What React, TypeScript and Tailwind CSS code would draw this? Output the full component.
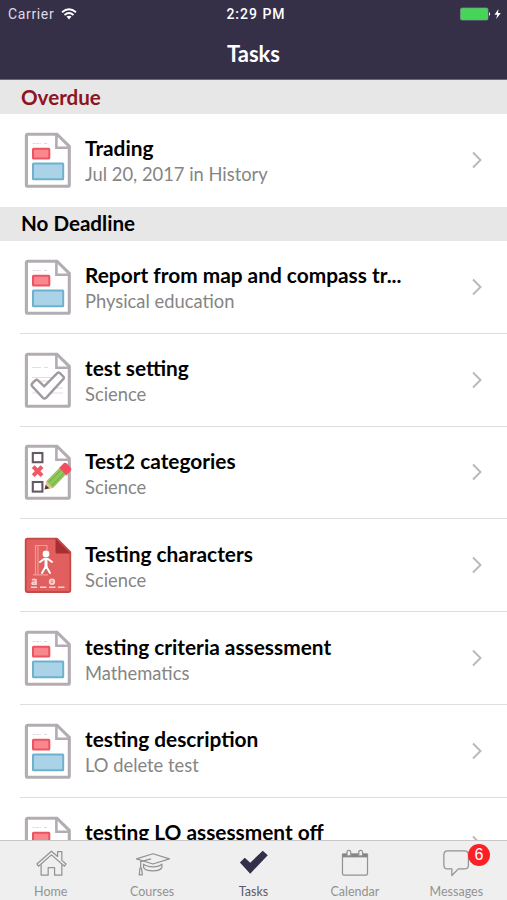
import type { ReactNode } from "react";

type IconKind = "report" | "check" | "categories" | "hangman";

interface Task {
  title: string;
  subtitle: string;
  icon: IconKind;
}

const overdue: Task[] = [
  { title: "Trading", subtitle: "Jul 20, 2017 in History", icon: "report" },
];

const noDeadline: Task[] = [
  { title: "Report from map and compass tr...", subtitle: "Physical education", icon: "report" },
  { title: "test setting", subtitle: "Science", icon: "check" },
  { title: "Test2 categories", subtitle: "Science", icon: "categories" },
  { title: "Testing characters", subtitle: "Science", icon: "hangman" },
  { title: "testing criteria assessment", subtitle: "Mathematics", icon: "report" },
  { title: "testing description", subtitle: "LO delete test", icon: "report" },
  { title: "testing LO assessment off", subtitle: "", icon: "report" },
];

function Sheet({ children }: { children: ReactNode }) {
  return (
    <svg viewBox="0 0 48 56" className="h-14 w-12 shrink-0" fill="none">
      <path
        d="M3.8 2.2H33L45.3 14.5V52.9Q45.3 54.3 43.9 54.3H3.8Q2.4 54.3 2.4 52.9V3.6Q2.4 2.2 3.8 2.2Z"
        fill="#fff"
        stroke="#b3adb3"
        strokeWidth="3.1"
      />
      <path d="M32.4 3V15.8H45" stroke="#b3adb3" strokeWidth="2.6" />
      {children}
    </svg>
  );
}

function TaskIcon({ kind }: { kind: IconKind }) {
  if (kind === "hangman") {
    return (
      <svg viewBox="0 0 48 56" className="h-14 w-12 shrink-0" fill="none">
        <path
          d="M3.4 1.7H33L46.3 15V53.2Q46.3 55 44.5 55H3.4Q1.7 55 1.7 53.2V3.4Q1.7 1.7 3.4 1.7Z"
          fill="#e15f5e"
          stroke="#c54947"
          strokeWidth="1.8"
        />
        <path d="M31.5 1.5L46.5 16.5H33Q31.5 16.5 31.5 15Z" fill="#a72f32" />
        <path d="M11.5 37.5V8.5H23V13M14 37.5V9M9 37.8H24" stroke="#ef9c99" strokeWidth="1.2" />
        <circle cx="22" cy="17" r="3.4" fill="#fff" />
        <path d="M16 25L20 22H24L28 25M22 22V29L18 36M22 29L26 36" stroke="#fff" strokeWidth="2" strokeLinecap="round" />
        <path d="M20.5 22H23.5V30H20.5Z" fill="#fff" />
        <path d="M7 50.2H13M16 50.2H22.5M25 50.2H31.5M34 50.2H40.5" stroke="#f8d1ce" strokeWidth="1.4" />
        <path d="M8 43.2Q10 41.5 12 43V47.2H8.5Q7 45.8 10 45H12" stroke="#f8d1ce" strokeWidth="1.7" />
        <circle cx="28" cy="44.8" r="2.3" stroke="#f8d1ce" strokeWidth="1.8" />
        <path d="M27 44.8H30" stroke="#f8d1ce" />
      </svg>
    );
  }

  if (kind === "categories") {
    return (
      <Sheet>
        <rect x="8.8" y="9" width="9.6" height="9.2" stroke="#655963" strokeWidth="2.1" />
        <rect x="8.8" y="38" width="9.6" height="9.6" stroke="#655963" strokeWidth="2.1" />
        <path d="M9.2 22.7L18 31.7M18 22.7L9.2 31.7" stroke="#ef5962" strokeWidth="4" />
        <path d="M20.9 45L22.5 37L36 23.2L42.5 30L29 44Z" fill="#91c65b" />
        <path d="M24.5 38.5L38 25.2M27.5 42L40.3 28.8" stroke="#72ab43" strokeWidth="1" />
        <path d="M20.9 45L22.5 37L29 44Z" fill="#e8c08d" />
        <path d="M20.5 45.6L21.8 41L25.2 44.3Z" fill="#43323a" />
        <path d="M35.3 23.7L39.2 19.7Q41 18 43 19.8L46.7 23.4Q48 25.2 46.7 27L42.3 31.5Z" fill="#f04f60" />
      </Sheet>
    );
  }

  if (kind === "check") {
    return (
      <Sheet>
        <path d="M8.2 15.5H17M20 15.5H24M8.2 25.5H30M8.2 29H28M8.2 36H39M8.2 41H39" stroke="#e1dee1" strokeWidth="1.1" />
        <path
          d="M8.2 34.2Q7 32.7 8.3 31.4L11.3 28.3Q12.7 27.1 14 28.4L20.2 34.3L33.3 21.1Q34.6 19.9 35.9 21.2L39.3 24.5Q40.5 25.8 39.2 27.1L22.3 45.6Q20.5 47.5 18.7 45.6Z"
          fill="#fff"
          stroke="#a199a1"
          strokeWidth="2.4"
        />
      </Sheet>
    );
  }

  return (
    <Sheet>
      <path d="M8.5 11.5H17M20 11.5H24" stroke="#dedbde" strokeWidth="1.2" strokeDasharray="3 .7" />
      <rect x="9" y="16.7" width="16.3" height="9.8" rx=".6" fill="#fa878d" stroke="#ed5360" strokeWidth="2" />
      <rect x="9" y="31.5" width="30.2" height="15.8" rx=".6" fill="#aad3e8" stroke="#6fb0cd" strokeWidth="2" />
    </Sheet>
  );
}

function SectionHeader({ title, className }: { title: string; className: string }) {
  return (
    <div className={`flex h-[34px] items-center bg-[#e7e7e7] pl-[21px] text-[20.6px] font-bold ${className}`}>
      {title}
    </div>
  );
}

function TaskRow({ task, divider }: { task: Task; divider: boolean }) {
  return (
    <div className="h-[92.85px] shrink-0 pl-5">
      <div className={`flex h-full items-center border-b pr-[25px] pl-1 ${divider ? "border-[#dedede]" : "border-transparent"}`}>
        <div>
          <TaskIcon kind={task.icon} />
        </div>
        <div className="ml-[13px] min-w-0 flex-1 pt-[3px] whitespace-nowrap">
          <p className="text-[20.85px] leading-[26px] font-bold text-black">{task.title}</p>
          <p className="h-[26px] text-[18.35px] leading-[26px] text-[#858585]">{task.subtitle}</p>
        </div>
        <svg viewBox="0 0 10 18" className="h-[18px] w-[10px]" fill="none" stroke="#b8b8bc" strokeWidth="1.9">
          <path d="M1 1.5L8.5 9L1 16.5" />
        </svg>
      </div>
    </div>
  );
}

function StatusBar() {
  return (
    <div className="grid h-7 grid-cols-3 items-center pr-[5px] pl-2 font-['Roboto',sans-serif] text-[14px]">
      <div className="flex items-center gap-[7px] text-[#dedbe6]">
        <span className="tracking-[0.65px]">Carrier</span>
        <svg viewBox="0 0 16 12" className="h-3 w-4" fill="none" stroke="#fff" strokeWidth="1.8">
          <path d="M1 4.2Q8 -1.8 15 4.2M3.5 7Q8 3 12.5 7" />
          <path d="M5.5 8.6Q8 6.7 10.5 8.6L8 11.4Z" fill="#fff" stroke="none" />
        </svg>
      </div>
      <span className="pl-0.5 text-center font-medium tracking-[1px] text-white">2:29 PM</span>
      <svg viewBox="0 0 42 14" className="h-3.5 w-[42px] justify-self-end">
        <rect x=".5" y="1" width="27.5" height="12" rx="1.5" fill="#45d657" stroke="#809b91" strokeWidth=".7" />
        <path d="M29 5V9Q31.2 7 29 5Z" fill="#fff" />
        <path d="M38.5 2L34.5 7.7H37.2L36.2 12L40.8 6H38Z" fill="#fff" />
      </svg>
    </div>
  );
}

function Tab({ label, active, children }: { label: string; active?: boolean; children: ReactNode }) {
  return (
    <div className={`flex flex-1 flex-col items-center pt-1.5 text-[12.5px] ${active ? "text-[#5c586a]" : "text-[#929292]"}`}>
      <svg viewBox="0 0 40 34" className="h-[34px] w-10" fill="none" stroke="#929292" strokeWidth="1.3" strokeLinejoin="round">
        {children}
      </svg>
      <span className="mt-1 leading-[17px]">{label}</span>
    </div>
  );
}

function TabBar() {
  return (
    <nav className="relative flex h-[60px] shrink-0 border-t border-[#c7c7c7] bg-[#efefef]">
      <Tab label="Home">
        <path d="M5 18L20.5 4.5L27 10V5H31.5V14.2L36 18L34.3 20.4L20.5 8.4L6.7 20.4Z" />
        <path d="M9.5 18.5V30H17V22H23.8V30H31.5V18.5" />
      </Tab>
      <Tab label="Courses">
        <path d="M3.5 12.7L21 7.2L38.5 12.7L21 18.1Z" />
        <path d="M11 18.2V21.5Q12.5 25.3 21 25.3Q29.5 25.3 30.5 21.5V18.2Q28 21 21 21Q14 21 11 18.2Z" />
        <path d="M19 12.7L8 15.5V22M7.2 22.5H8.8L9.8 29.5H6.5Z" />
      </Tab>
      <Tab label="Tasks" active>
        <path d="M5 16.5L10.2 11.4L16 16.7L29.3 4L34.6 8.7L16 28.3Z" fill="#342f49" stroke="none" />
      </Tab>
      <Tab label="Calendar">
        <path d="M6.7 7.5H33.3V28.1Q33.3 29.8 31.6 29.8H8.3Q6.7 29.8 6.7 28.1Z" />
        <path d="M7 7H33V11H7Z" fill="#858585" stroke="none" />
        <path d="M11.5 9.5V5.5Q11.5 3.5 13.5 3.5T15.5 5.5V9.5ZM24 9.5V5.5Q24 3.5 26 3.5T28 5.5V9.5Z" fill="#efefef" />
      </Tab>
      <Tab label="Messages">
        <path d="M10.9 4H28.9Q33.2 4 33.2 8.5V19Q33.2 23.3 28.9 23.3H22.5L15.6 30.3V23.3H10.9Q7.1 23.3 7.1 19V8.5Q7.1 4 10.9 4Z" />
      </Tab>
      <span className="absolute top-[3px] right-[17px] flex h-[22px] w-[22px] items-center justify-center rounded-full bg-[#fb1f28] font-['Liberation_Sans',sans-serif] text-[16px] text-white">
        6
      </span>
    </nav>
  );
}

export default function App() {
  return (
    <div className="flex h-[900px] w-full flex-col overflow-hidden bg-white font-['Lato',sans-serif]">
      <header className="h-20 shrink-0 border-b border-[#6b6680] bg-[#352f48]">
        <StatusBar />
        <h1 className="text-center text-[22px] leading-[51px] font-bold text-white">Tasks</h1>
      </header>
      <main className="min-h-0 flex-1 overflow-hidden">
        <SectionHeader title="Overdue" className="text-[#8d1420]" />
        {overdue.map((task) => (
          <TaskRow key={task.title} task={task} divider={false} />
        ))}
        <SectionHeader title="No Deadline" className="text-black" />
        {noDeadline.map((task) => (
          <TaskRow key={task.title} task={task} divider />
        ))}
      </main>
      <TabBar />
    </div>
  );
}
